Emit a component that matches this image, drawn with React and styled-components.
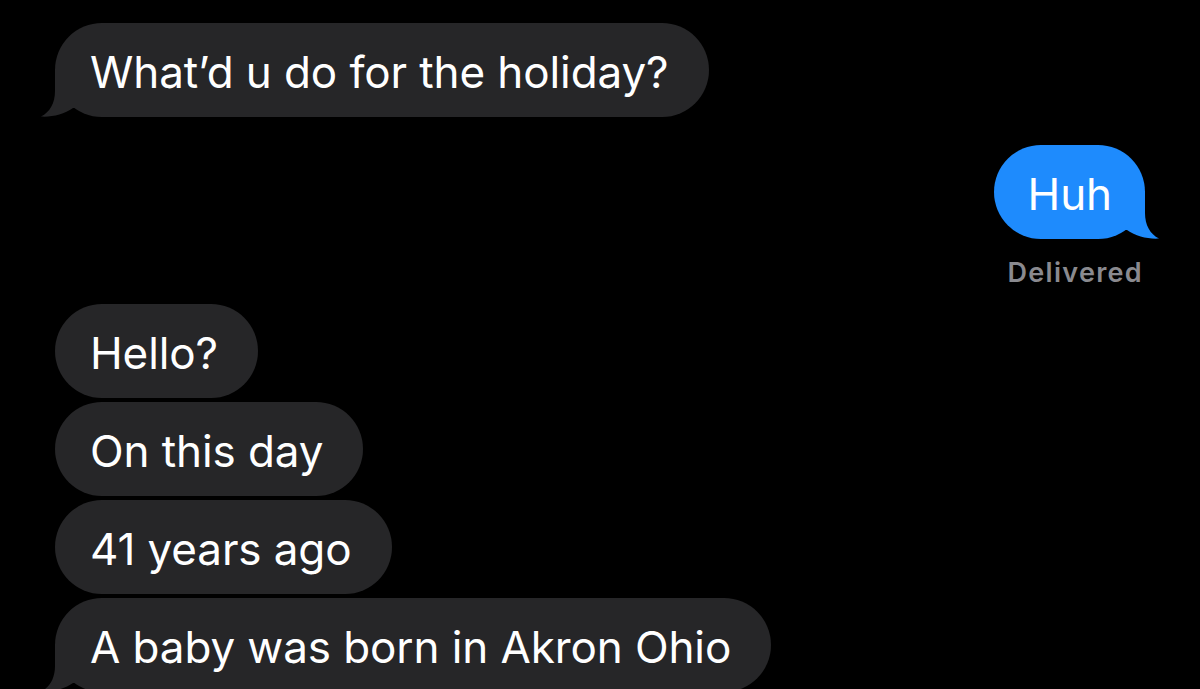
import React from "react";
import styled, { createGlobalStyle } from "styled-components";

const Global = createGlobalStyle`
  html, body { margin: 0; padding: 0; background: #000; }
  body { font-family: Inter, "Noto Sans", sans-serif; -webkit-font-smoothing: antialiased; }
`;

const Screen = styled.div`
  width: 1200px;
  height: 689px;
  overflow: hidden;
  background: #000;
  display: flex;
  flex-direction: column;
  padding: 23px 55px 0 55px;
  box-sizing: border-box;
`;

const Group = styled.div`
  display: flex;
  flex-direction: column;
  align-items: ${(p) => (p.$out ? "flex-end" : "flex-start")};
  gap: 4px;
  margin-top: ${(p) => p.$mt || 0}px;
`;

const Bubble = styled.div`
  position: relative;
  height: 94px;
  box-sizing: border-box;
  display: flex;
  align-items: center;
  padding: 3px ${(p) => (p.$out ? 33 : 40)}px 0 ${(p) => (p.$out ? 34 : 35)}px;
  border-radius: 47px;
  background: ${(p) => (p.$out ? "#1e8bfd" : "#262628")};
  color: #fff;
  font-size: 44px;
  letter-spacing: -0.1px;
  white-space: nowrap;
`;

const Tail = styled.svg`
  position: absolute;
  bottom: 0;
  ${(p) => (p.$out ? "right: -15px; transform: scaleX(-1);" : "left: -15px;")}
  width: 60px;
  height: 48px;
  overflow: visible;
`;

const Status = styled.div`
  margin-top: 13px;
  margin-right: 2px;
  font-size: 27px;
  line-height: 33px;
  font-weight: 600;
  color: #8a8a8f;
  letter-spacing: 1.3px;
`;

function BubbleTail({ out, color }) {
  return (
    <Tail $out={out} viewBox="0 0 60 48">
      <path
        d="M15 0 L15 22 C15 34 10 43 1 47.6 C12 48.4 24 45 33 39 L60 39 L60 0 Z"
        fill={color}
      />
    </Tail>
  );
}

function Message({ out, tail, children }) {
  const color = out ? "#1e8bfd" : "#262628";
  return (
    <Bubble $out={out}>
      {tail && <BubbleTail out={out} color={color} />}
      <span style={{ position: "relative" }}>{children}</span>
    </Bubble>
  );
}

export default function App() {
  return (
    <>
      <Global />
      <Screen>
        <Group>
          <Message tail>What’d u do for the holiday?</Message>
        </Group>
        <Group $out $mt={28}>
          <Message out tail>Huh</Message>
          <Status>Delivered</Status>
        </Group>
        <Group $mt={15}>
          <Message>Hello?</Message>
          <Message>On this day</Message>
          <Message>41 years ago</Message>
          <Message tail>A baby was born in Akron Ohio</Message>
        </Group>
      </Screen>
    </>
  );
}
